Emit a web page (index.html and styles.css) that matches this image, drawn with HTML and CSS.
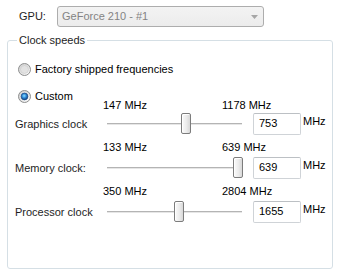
FILE: index.html
```html
<!DOCTYPE html>
<html lang="en">
<head>
  <meta charset="UTF-8" />
  <title>Clock speeds</title>
  <link rel="stylesheet" href="styles.css">
</head>
<body>

<div class="gpu-row">
  <span class="gpu-label">GPU:</span>
  <div class="combo">
    <span class="combo-text">GeForce 210 - #1</span>
    <svg class="combo-arrow" width="7" height="4" viewBox="0 0 7 4"><path d="M0 0 H7 L3.5 4 Z" fill="#a6a6a6"/></svg>
  </div>
</div>

<fieldset class="group">
  <legend>Clock speeds</legend>

  <label class="radio first">
    <svg width="13" height="13" viewBox="0 0 13 13">
      <defs>
        <radialGradient id="ring" cx="0.65" cy="0.7" r="0.7">
          <stop offset="0" stop-color="#ffffff"/>
          <stop offset="1" stop-color="#d4d4d4"/>
        </radialGradient>
      </defs>
      <circle cx="6.5" cy="6.5" r="6" fill="url(#ring)" stroke="#8e8f8f"/>
      <circle cx="6.5" cy="6.5" r="4" fill="#e2e2e2" stroke="#c9c9c9" stroke-width="0.6"/>
    </svg>
    <span>Factory shipped frequencies</span>
  </label>

  <label class="radio second">
    <svg width="13" height="13" viewBox="0 0 13 13">
      <defs>
        <radialGradient id="dot" cx="0.45" cy="0.4" r="0.6">
          <stop offset="0" stop-color="#8fe0ff"/>
          <stop offset="0.5" stop-color="#2e8ad8"/>
          <stop offset="1" stop-color="#0f3f7c"/>
        </radialGradient>
      </defs>
      <circle cx="6.5" cy="6.5" r="6" fill="url(#ring)" stroke="#8e8f8f"/>
      <circle cx="6.5" cy="6.5" r="3.4" fill="url(#dot)" stroke="#1c4a86" stroke-width="0.7"/>
    </svg>
    <span>Custom</span>
  </label>

  <div class="clock first">
    <div class="range"><span class="min">147 MHz</span><span>1178 MHz</span></div>
    <div class="clock-row">
      <span class="clock-name">Graphics clock</span>
      <div class="slider"><div class="track"></div><div class="thumb" style="left: 74px"></div></div>
      <div class="edit">753</div>
      <span class="unit">MHz</span>
    </div>
  </div>

  <div class="clock">
    <div class="range"><span class="min">133 MHz</span><span>639 MHz</span></div>
    <div class="clock-row">
      <span class="clock-name">Memory clock:</span>
      <div class="slider"><div class="track"></div><div class="thumb" style="left: 126px"></div></div>
      <div class="edit">639</div>
      <span class="unit">MHz</span>
    </div>
  </div>

  <div class="clock">
    <div class="range"><span class="min">350 MHz</span><span>2804 MHz</span></div>
    <div class="clock-row">
      <span class="clock-name">Processor clock</span>
      <div class="slider"><div class="track"></div><div class="thumb" style="left: 67px"></div></div>
      <div class="edit">1655</div>
      <span class="unit">MHz</span>
    </div>
  </div>
</fieldset>

</body>
</html>
```

FILE: styles.css
```css
body {
  margin: 0;
  width: 337px;
  height: 274px;
  overflow: hidden;
  background: #fff;
  color: #000;
  font-family: "Liberation Sans", Arial, sans-serif;
  font-size: 11px;
  line-height: 13px;
}

.gpu-row {
  display: flex;
  align-items: center;
  padding: 6px 0 0 19px;
  height: 21px;
}

.gpu-label {
  width: 38px;
  color: #1e1e1e;
}

.combo {
  width: 207px;
  height: 21px;
  box-sizing: border-box;
  display: flex;
  align-items: center;
  justify-content: space-between;
  padding: 0 5px 0 4px;
  border: 1px solid #adadad;
  border-radius: 3px;
  background: linear-gradient(#f3f3f3, #ececec);
  color: #838383;
}

.combo-arrow {
  margin-top: 1px;
}

.group {
  margin: 7px 0 0 7px;
  padding: 0 0 0 7px;
  width: 326px;
  height: 235px;
  box-sizing: border-box;
  border: 1px solid #d5dfe5;
  border-radius: 3px;
}

.group legend {
  margin-left: 2px;
  padding: 0 2px;
  line-height: 13px;
  color: #1e1e1e;
}

.radio {
  display: flex;
  align-items: center;
  height: 14px;
  margin-left: 3px;
}

.radio svg {
  display: block;
  margin-right: 4px;
}

.radio.first {
  margin-top: 15px;
}

.radio.second {
  margin-top: 13px;
}

.clock {
  margin-top: 6px;
}

.clock.first {
  margin-top: -4px;
}

.range {
  display: flex;
  height: 13px;
  padding-left: 88px;
  margin-bottom: 3px;
}

.clock.first .range {
  margin-bottom: 1px;
}

.range .min {
  width: 119px;
}

.clock-row {
  display: flex;
  align-items: center;
  height: 22px;
}

.clock-name {
  width: 92px;
  color: #1e1e1e;
}

.slider {
  position: relative;
  width: 135px;
  height: 22px;
}

.track {
  position: absolute;
  left: 0;
  right: 0;
  top: 10px;
  height: 1px;
  border-top: 1px solid #b4b4b4;
  background: #e6e6e6;
}

.thumb {
  position: absolute;
  top: 0;
  width: 10px;
  height: 21px;
  box-sizing: border-box;
  border: 1px solid #7c7c7c;
  border-radius: 2px;
  background: linear-gradient(to right, #fbfbfb, #ececec 55%, #d8d8d8);
  box-shadow: inset 1px 1px 0 #fff;
}

.edit {
  margin-left: 11px;
  width: 48px;
  height: 22px;
  box-sizing: border-box;
  padding-left: 5px;
  line-height: 19px;
  border: 1px solid #cfd3d7;
  border-top-color: #bcc0c4;
  border-radius: 2px;
}

.unit {
  align-self: flex-start;
  margin: 2px 0 0 2px;
}
```
